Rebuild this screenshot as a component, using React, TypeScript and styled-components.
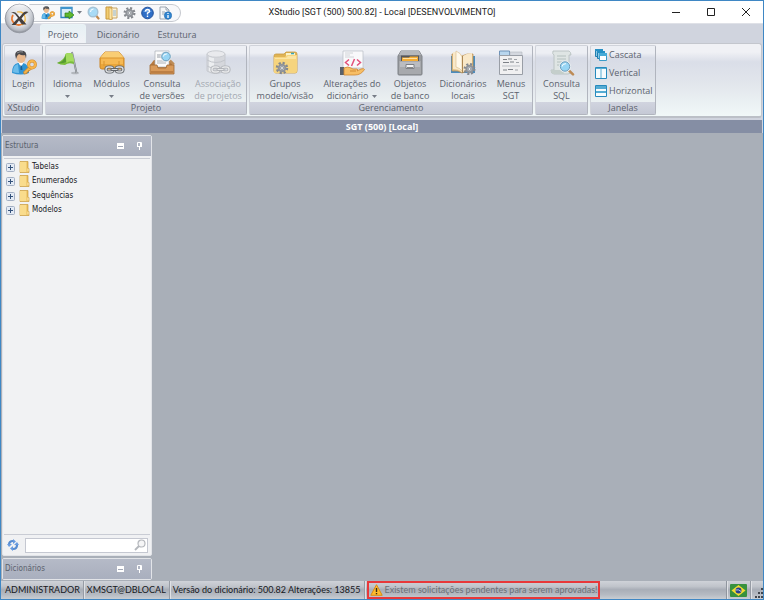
import React from "react";
import styled, { createGlobalStyle, css } from "styled-components";

const GlobalStyle = createGlobalStyle`
  * { box-sizing: border-box; }
  body { margin: 0; }
  button, input { font: inherit; color: inherit; }
  button { margin: 0; padding: 0; border: 0; background: none; cursor: pointer; }
  svg { display: block; flex: none; }
`;

const Window = styled.div`
  position: relative;
  display: flex;
  flex-direction: column;
  min-width: 660px;
  height: 100vh;
  border: 1px solid #3f87c4;
  background: #d0d4de;
  color: #5b626d;
  font: 9px/12px "Open Sans", "Noto Sans", sans-serif;
  overflow: hidden;
`;

const TitleBar = styled.header`
  display: grid;
  grid-template-columns: 1fr auto 1fr;
  align-items: center;
  height: 22px;
  flex: none;
  background: #fff;
`;

const Title = styled.h1`
  margin: 0;
  color: #1c1c1c;
  font: 9px/12px Roboto, sans-serif;
  white-space: nowrap;
`;

const QuickAccess = styled.div`
  display: flex;
  align-items: center;
  justify-self: start;
  gap: 5px;
  height: 18px;
  margin: 1px 0 0 28px;
  padding: 0 8px 0 11px;
  border: 1px solid #c6c9cf;
  border-left-color: transparent;
  border-radius: 0 9px 9px 0;
  background: #f7f8fa;
`;

const ToolButton = styled.button`
  display: flex;
  align-items: center;
  gap: 3px;
`;

const WindowControls = styled.div`
  display: flex;
  justify-self: end;
`;

const WindowButton = styled.button`
  display: flex;
  align-items: center;
  justify-content: center;
  width: 35px;
  height: 22px;
`;

const Orb = styled.button`
  position: absolute;
  z-index: 2;
  top: 1px;
  left: 2px;
`;

const Tabs = styled.nav`
  display: flex;
  align-items: flex-end;
  flex: none;
  height: 20px;
  padding-left: 39px;
  border-top: 1px solid #dfe1e7;
  background: #d0d4de;
`;

const Tab = styled.button<{ $active?: boolean; $width: number }>`
  width: ${(p) => p.$width}px;
  height: 19px;
  padding-top: 1px;
  border: 1px solid transparent;
  border-bottom: 0;
  border-radius: 3px 3px 0 0;
  ${(p) =>
    p.$active &&
    css`
      border-color: #e9f2f5;
      background: linear-gradient(#e6f0f4, #f1f2f6);
    `}
`;

const Ribbon = styled.div`
  display: flex;
  flex: none;
  gap: 2px;
  height: 75px;
  margin: 0 1px;
  padding: 1px;
  border: 1px solid #c3c6cd;
  border-bottom: 2px solid #bcc0c7;
  border-radius: 3px;
  background: linear-gradient(#f0f1f5 0 8px, #dadee8 18px, #e2e6ec 40px, #f1f8f8);
`;

const Group = styled.section`
  display: flex;
  flex-direction: column;
  border: 1px solid #b1b5be;
  border-top-color: #d0d3da;
  border-left-color: #d0d3da;
  border-radius: 2px;
  background: linear-gradient(#edeff4 0 7px, #d7dbe6 12px, #dde1e8 30px, #ebf1f2 56px);
`;

const GroupBody = styled.div`
  display: flex;
  flex: none;
  height: 56px;
`;

const GroupLabel = styled.h2`
  flex: 1;
  margin: 0;
  padding: 0 2px;
  background: linear-gradient(#d1d4df, #c5c9d5);
  font: 9px/12px "Open Sans", "Noto Sans", sans-serif;
  text-align: center;
`;

const LargeButton = styled.button<{ $width: number }>`
  display: flex;
  flex-direction: column;
  align-items: center;
  width: ${(p) => p.$width}px;
  padding-top: 4px;
  white-space: nowrap;
  &:disabled { color: #a3a8b1; cursor: default; }
`;

const Caption = styled.span`
  display: flex;
  align-items: center;
  justify-content: center;
  gap: 4px;
  height: 12px;
`;

const IconSlot = styled.span`
  display: block;
  height: 28px;
`;

const SmallColumn = styled.div`
  display: flex;
  flex-direction: column;
  width: 64px;
  padding-left: 4px;
`;

const SmallButton = styled.button`
  display: flex;
  align-items: center;
  gap: 2px;
  height: 18px;
`;

const DocumentBar = styled.div`
  flex: none;
  height: 13px;
  margin: 2px 1px 0;
  background: #858ea4;
  color: #fff;
  font: bold 9px/13px "Open Sans", sans-serif;
  text-align: center;
`;

const Workspace = styled.main`
  display: flex;
  flex: 1;
  min-height: 0;
  padding: 2px 1px 0;
  background: #a9afb8;
`;

const Sidebar = styled.aside`
  display: flex;
  flex-direction: column;
  gap: 2px;
  width: 150px;
  padding-bottom: 1px;
`;

const Panel = styled.section<{ $grow?: boolean }>`
  display: flex;
  flex-direction: column;
  flex: ${(p) => (p.$grow ? "1" : "none")};
  min-height: 0;
  border: 1px solid #e2e4e8;
  border-radius: 2px;
  background: #f0f1f3;
`;

const PanelHeader = styled.header`
  display: flex;
  align-items: center;
  flex: none;
  height: 20px;
  padding: 0 2px;
  background: linear-gradient(#b5bac7, #a9afbe);
  font: 8px/12px "DejaVu Sans Condensed", "DejaVu Sans", sans-serif;
`;

const PanelTitle = styled.h2`
  flex: 1;
  margin: 0;
  font: inherit;
`;

const PanelButton = styled.button`
  display: flex;
  justify-content: center;
  width: 19px;
`;

const Tree = styled.ul`
  flex: 1;
  margin: 2px 1px 0;
  padding: 1px 0 0 2px;
  border: 1px solid #c9ccd4;
  border-width: 1px 0;
  background: #f1f2f3;
  color: #15161b;
  font: 8px/12px "DejaVu Sans Condensed", "DejaVu Sans", sans-serif;
  list-style: none;
`;

const TreeRow = styled.li`
  display: flex;
  align-items: center;
  height: 14px;
  &:nth-child(even) { margin-bottom: 1px; }
`;

const Expander = styled.button`
  margin-right: 4px;
`;

const TreeLabel = styled.span`
  margin-left: 2px;
`;

const SearchRow = styled.div`
  display: flex;
  align-items: center;
  flex: none;
  gap: 6px;
  height: 20px;
  padding: 0 3px 0 4px;
`;

const SearchBox = styled.label`
  display: flex;
  align-items: center;
  flex: 1;
  min-width: 0;
  height: 15px;
  padding-right: 1px;
  border: 1px solid #c5c8d1;
  background: #fff;
`;

const SearchInput = styled.input`
  flex: 1;
  width: 0;
  min-width: 0;
  height: 13px;
  padding: 0 3px;
  border: 0;
  outline: 0;
  background: transparent;
`;

const StatusBar = styled.footer`
  display: flex;
  flex: none;
  height: 18px;
  padding-left: 1px;
  background: linear-gradient(#cfd2d8, #c0c4cb 30%, #a9aeb7 48%, #b5bac2 75%, #c9cdd2);
  color: #16181d;
  font: 9px/18px Lato, sans-serif;
  white-space: nowrap;
`;

const StatusItem = styled.span`
  display: flex;
  align-items: center;
  justify-content: center;
  padding: 0 3px;
  border-right: 1px solid #979ca5;
  box-shadow: 1px 0 #dfe1e5;
`;

const StatusFill = styled.span`
  flex: 1;
  border-right: 1px solid #8f959e;
  box-shadow: 1px 0 #dfe1e5;
`;

const Alert = styled.button`
  display: flex;
  align-items: center;
  gap: 2px;
  margin-left: 2px;
  padding: 0 1px;
  border: 2px solid #e8383a;
  color: #6d7178;
  line-height: 14px;
`;

const Grip = styled.span`
  display: flex;
  align-items: flex-end;
  padding-left: 3px;
`;

function Arrow() {
  return <svg width="5" height="3" viewBox="0 0 5 3"><path d="M0 0h5L2.5 3z" fill="#777d87" /></svg>;
}

function OrbIcon() {
  return (
    <svg width="33" height="33" viewBox="0 0 33 33">
      <defs>
        <radialGradient id="orb" cx=".5" cy=".45" r=".55">
          <stop offset="0" stopColor="#fff" /><stop offset=".55" stopColor="#e1e3e7" />
          <stop offset=".85" stopColor="#b5b9c1" /><stop offset="1" stopColor="#858992" />
        </radialGradient>
        <linearGradient id="gloss" x2="0" y2="1">
          <stop stopColor="#f8f9fb" /><stop offset="1" stopColor="#ccd0d6" stopOpacity=".2" />
        </linearGradient>
      </defs>
      <circle cx="16.5" cy="16.5" r="14.3" fill="url(#orb)" stroke="#969aa3" />
      <path d="M3 16a13.5 13.5 0 0127 0q-13-6-27 0z" fill="url(#gloss)" />
      <path d="M10 13q-3 5 2 9 4 2 7 0" fill="none" stroke="#e8782e" strokeWidth="1.8" />
      <path d="M14 10q7-1 8 5 1 5-3 8" fill="none" stroke="#f3b53c" strokeWidth="1.2" />
      <path d="M8 10.500q4-1.500 6 1.500l2.500 3 4-4.500q2-1.500 5-.5-4 2-7 6.500l5 6h-4.500l-3-4-3.500 4.500H8.500l6.500-7-3-4Q10 10.500 8 10.500z" fill="#46403d" />
    </svg>
  );
}

function UserKeyIcon({ size }: { size: number }) {
  return (
    <svg width={size} height={size} viewBox="0 0 26 26">
      <path d="M1 23q0-9 6-10h5q6 1 6 10-8 3-17 0z" fill="#2f94d4" />
      <path d="M2 22q0-7 5-8l1 9q-4 0-6-1z" fill="#6bbcea" />
      <path d="M7 12l3 5 3-5v-3H7z" fill="#fff" />
      <path d="M9.500 15l1.500 1 .5 4h-2z" fill="#1d5e93" />
      <ellipse cx="10" cy="7.500" rx="4.600" ry="5.500" fill="#eab98e" />
      <path d="M5 9Q2 1 9 .5q8-.5 6 8l-1-3.500q-3 1-6-1-2 1-3 5z" fill="#4a494c" />
      <path d="M6 3q3-2 6-1" fill="none" stroke="#8d9094" />
      <path d="M18.500 16l-6 6 .5 2 3-.5v-1.500h1.500V20.500h1.500l2-2" fill="#f2b34a" stroke="#c87d20" strokeWidth=".7" />
      <circle cx="21" cy="14.500" r="3.400" fill="none" stroke="#d18a2c" strokeWidth="3" />
      <circle cx="21" cy="14.500" r="3.400" fill="none" stroke="#f7b64d" strokeWidth="2" />
    </svg>
  );
}

function FlagIcon() {
  return (
    <svg width="26" height="26" viewBox="0 0 26 26">
      <ellipse cx="20" cy="23" rx="4" ry="1.300" fill="#b3b7bd" />
      <path d="M17 2l4.500 21" stroke="#70757b" strokeWidth="1.800" /><path d="M17 2l4.500 21" stroke="#d8dbde" strokeWidth=".6" />
      <path d="M17.500 4q-4-2-7 0-1 6-8.500 9 3 2 8 2 3-3 9-1z" fill="#79bd3a" />
      <path d="M17.500 4q-4-2-7 0l1 9q3-3 8-1z" fill="#a4dc60" />
      <path d="M10.500 5q-1 7-8.500 8 5 1 9-1z" fill="#579b32" />
    </svg>
  );
}

function ChainLinks({ muted }: { muted?: boolean }) {
  const dark = muted ? "#b2b5ba" : "#62666b";
  const light = muted ? "#e6e7e9" : "#d7d9dc";
  return (
    <g fill="none" strokeLinecap="round">
      <g stroke={dark} strokeWidth="3.200"><rect x="7" y="17" width="7" height="5" rx="2.500" /><rect x="17" y="17" width="7" height="5" rx="2.500" /></g>
      <g stroke={light} strokeWidth="1.400"><rect x="7" y="17" width="7" height="5" rx="2.500" /><rect x="17" y="17" width="7" height="5" rx="2.500" /></g>
      <path d="M13 19.500h5" stroke={dark} strokeWidth="3" /><path d="M13 19.500h5" stroke={light} />
    </g>
  );
}

function ModulesIcon() {
  return (
    <svg width="26" height="26" viewBox="0 0 26 26">
      <path d="M6 2h14l5 6v9q0 2-2 2H3q-2 0-2-2V8z" fill="#eaa63a" stroke="#cc8524" />
      <path d="M6 2h14l5 6H1z" fill="#f9cd74" />
      <path d="M2 8h22v6H2z" fill="#f6b953" /><path d="M1 8h24M5 16v-5M20 16v-5" stroke="#d9942f" />
      <ChainLinks />
    </svg>
  );
}

function MagnifierMark({ x, y, r }: { x: number; y: number; r: number }) {
  return (
    <g>
      <path d={`M${x + r * 0.7} ${y + r * 0.7}l${r} ${r}`} stroke="#bd8b55" strokeWidth="2.500" strokeLinecap="round" />
      <circle cx={x} cy={y} r={r} fill="#b9e5fa" stroke="#e8eef2" strokeWidth="2.500" />
      <circle cx={x} cy={y} r={r} fill="#97d5f4" stroke="#6d9dbb" strokeWidth="1" />
      <path d={`M${x - r * 0.6} ${y}q0-${r * 0.6} ${r * 0.8}-${r * 0.6}`} fill="none" stroke="#fff" />
    </g>
  );
}

function InboxIcon() {
  return (
    <svg width="26" height="26" viewBox="0 0 26 26">
      <path d="M1 15l4-5h16l4 5v8H1z" fill="#b87b40" />
      <path d="M6 1h14v16H6z" fill="#fbfbfb" stroke="#abb0b5" strokeWidth=".7" />
      <path d="M8 4h4v4H8z" fill="#c9ccd0" /><path d="M8 11h9M8 13h9M13 4.500h3" stroke="#aeb3b8" />
      <path d="M1 15h7l1 3h8l1-3h7v9H1z" fill="#d99a59" stroke="#9f6732" strokeWidth=".8" />
      <path d="M2 21h22v2H2z" fill="#bd7f43" />
      <MagnifierMark x={17} y={6.5} r={4.3} />
    </svg>
  );
}

function DatabaseIcon() {
  return (
    <svg width="26" height="26" viewBox="0 0 26 26">
      <path d="M2 4v17q8 5 18 0V4z" fill="#d5d7dc" stroke="#c6c9cf" />
      <path d="M4 7v14q3 2 5 2V8z" fill="#eceef0" />
      <path d="M2 10q9 5 18 0M2 16q9 5 18 0" fill="none" stroke="#c2c5cb" />
      <ellipse cx="11" cy="4" rx="9" ry="3.200" fill="#e9eaed" stroke="#c9ccd1" />
      <ChainLinks muted />
    </svg>
  );
}

function GearMark({ x, y, r = 5 }: { x: number; y: number; r?: number }) {
  return (
    <g fill="none">
      <circle cx={x} cy={y} r={r} stroke="#84888e" strokeWidth={r * 0.5} strokeDasharray={`${r * 0.42} ${r * 0.365}`} />
      <circle cx={x} cy={y} r={r * 0.67} fill="#cbced3" stroke="#8f9399" strokeWidth={r * 0.4} />
      <circle cx={x} cy={y} r={r * 0.3} fill="#eef0f2" stroke="#777c83" strokeWidth=".7" />
    </g>
  );
}

function FolderGearIcon() {
  return (
    <svg width="26" height="26" viewBox="0 0 26 26">
      <path d="M2 6q0-2 2-2h8l2-2h9q2 0 2 2v17q0 2-2 2H4q-2 0-2-2z" fill="#e0b455" stroke="#c99b40" strokeWidth=".8" />
      <path d="M14 3h9v4h-9z" fill="#f9f3c9" /><path d="M19 3.500h3" stroke="#36a4bd" strokeWidth="1.500" />
      <path d="M2 7h11l2-2h10v16q0 2-2 2H2z" fill="#f6d47e" /><path d="M3 8h11l2-2h8v3H3z" fill="#fbe4a2" />
      <GearMark x={10} y={18} r={5} />
    </svg>
  );
}

function CodeHandIcon() {
  return (
    <svg width="26" height="26" viewBox="0 0 26 26">
      <path d="M4 1h20v17H4z" fill="#f9f9fb" stroke="#b8bdc4" strokeWidth=".7" />
      <path d="M6 3h8M6 5h5M6 7h9" stroke="#d1d4d8" />
      <path d="M10 9.500l-3.500 3 3.500 3M18 9.500l3.500 3-3.500 3M15.500 9l-3 7" fill="none" stroke="#e2507a" strokeWidth="1.500" />
      <path d="M1 17h4v8H1z" fill="#59616b" />
      <path d="M5 18q4-2 7 0l2 1h4q2 1 0 2l4-2q3-1 3.500.5-3.500 5.500-9.500 5.500H5z" fill="#f7be66" stroke="#cf8833" strokeWidth=".8" />
      <path d="M11 21h6" stroke="#cf8833" />
    </svg>
  );
}

function CabinetIcon() {
  return (
    <svg width="26" height="26" viewBox="0 0 26 26">
      <path d="M4 1h18l3 5v18q0 1-1 1H2q-1 0-1-1V6z" fill="#97999d" stroke="#7f8287" />
      <path d="M4 1h18l2 4H2z" fill="#b5b8bc" /><path d="M4 5.500h18v6H4z" fill="#54565a" />
      <path d="M5 7.500h7l1-1h8v5H5z" fill="#f5ad35" /><path d="M6 8.500h14" stroke="#ffe0a0" />
      <path d="M2 11h22v13H2z" fill="#a7a9ad" /><path d="M3 12h20v5H3z" fill="#babcc0" />
      <path d="M9 14.500h8v4H9z" fill="#f2f3f4" stroke="#7d8085" /><path d="M10 17.500h6" stroke="#888" />
    </svg>
  );
}

function BookGearIcon() {
  return (
    <svg width="26" height="26" viewBox="0 0 26 26">
      <path d="M1 6h24v17H1z" fill="#4b8cbd" />
      <path d="M2 4q6-1 10 2 5-3 11-2v17q-7-1-11 2-4-3-10-2z" fill="#e8c68c" stroke="#b4894d" strokeWidth=".7" />
      <path d="M3 2q6 0 9 4v16q-3-3-9-3z" fill="#f9e9c9" /><path d="M13 6q4-3 9-3v16q-6 0-9 3z" fill="#f9e8c8" />
      <path d="M6 1q5 2 6 6v14q-2-3-6-4z" fill="#fff9eb" stroke="#d9bb86" strokeWidth=".6" />
      <path d="M12.500 6v17" stroke="#ad8752" />
      <GearMark x={19.5} y={19} r={4.8} />
    </svg>
  );
}

function MenuIcon() {
  return (
    <svg width="26" height="26" viewBox="0 0 26 26">
      <path d="M1.500 1h10v5h-10z" fill="#b8d6ee" stroke="#6f93b8" /><path d="M12 2h12v4H12z" fill="#d4d8df" stroke="#b4b8c0" strokeWidth=".6" />
      <path d="M1.500 5.500h23v19h-23z" fill="#f0f0f1" stroke="#999ea6" />
      <path d="M5 9.500h4M10 9h4M5 12.500h6M12 12h4M5 20h4M10 19.500h5" stroke="#7d8187" strokeWidth="1.200" />
      <path d="M4 16h18" stroke="#bbbfc4" /><path d="M16 9.500h3M18 12.500h3M17 20h3" stroke="#a0a4a9" />
    </svg>
  );
}

function SqlIcon() {
  return (
    <svg width="26" height="26" viewBox="0 0 26 26">
      <path d="M4 1h16q2 1 2 4h-2v15l2 1q0 3-3 3H5q-3 0-3-4h3V5Q3 4 4 1z" fill="#dfe5e4" stroke="#b3bcbb" strokeWidth=".8" />
      <path d="M8 6h9M8 9h9M8 12h8M8 15h5" stroke="#b4c0be" />
      <path d="M2 20h12l1 4H5q-3 0-3-4z" fill="#c4cecb" />
      <MagnifierMark x={16} y={16.5} r={4.7} />
    </svg>
  );
}

function LayoutIcon({ kind }: { kind: "cascade" | "vertical" | "horizontal" }) {
  return (
    <svg width="12" height="12" viewBox="0 0 12 12">
      {kind === "cascade" && (
        <>
          <path d="M.5.500h7v7h-7z" fill="#8cc8e4" stroke="#217eaf" /><path d="M0 0h8v2H0z" fill="#2790c4" />
          <path d="M2.500 2.500h7v7h-7z" fill="#8cc8e4" stroke="#217eaf" /><path d="M2 2h8v2H2z" fill="#2790c4" />
          <path d="M4.500 4.500h7v7h-7z" fill="#fff" stroke="#3a9ac8" /><path d="M4 4h8v3H4z" fill="#48abd7" />
        </>
      )}
      {kind === "vertical" && (
        <><path d="M.5.500h11v11H.5z" fill="#f5fbfd" stroke="#268abd" /><path d="M1 1h10v1H1z" fill="#54acd3" /><path d="M6 1v10" stroke="#5aaed4" /></>
      )}
      {kind === "horizontal" && (
        <><path d="M.5.500h11v11H.5z" fill="#f5fbfd" stroke="#268abd" /><path d="M1 1h10v3H1zM1 6h10v2H1z" fill="#54acd3" /></>
      )}
    </svg>
  );
}

function MinimizePanelIcon() {
  return <svg width="7" height="6" viewBox="0 0 7 6"><path d="M0 0h7v6H0z" fill="#fff" /><path d="M1 3.500h5" stroke="#a2a8b6" /></svg>;
}

function PinIcon() {
  return <svg width="7" height="8" viewBox="0 0 7 8"><path d="M1.500 4.500V.5h4v4M1 4.500h5M3.500 5v3M4.500 1v3" fill="none" stroke="#fff" /></svg>;
}

const treeItems = ["Tabelas", "Enumerados", "Sequências", "Modelos"];

interface Command {
  lines: string[];
  icon: React.ReactNode;
  width: number;
  arrow?: boolean;
  disabled?: boolean;
}

const groups: { label: string; commands: Command[] }[] = [
  { label: "XStudio", commands: [{ lines: ["Login"], icon: <UserKeyIcon size={26} />, width: 37 }] },
  {
    label: "Projeto",
    commands: [
      { lines: ["Idioma"], icon: <FlagIcon />, width: 43, arrow: true },
      { lines: ["Módulos"], icon: <ModulesIcon />, width: 45, arrow: true },
      { lines: ["Consulta", "de versões"], icon: <InboxIcon />, width: 56 },
      { lines: ["Associação", "de projetos"], icon: <DatabaseIcon />, width: 56, disabled: true },
    ],
  },
  {
    label: "Gerenciamento",
    commands: [
      { lines: ["Grupos", "modelo/visão"], icon: <FolderGearIcon />, width: 70 },
      { lines: ["Alterações do", "dicionário"], icon: <CodeHandIcon />, width: 64, arrow: true },
      { lines: ["Objetos", "de banco"], icon: <CabinetIcon />, width: 52 },
      { lines: ["Dicionários", "locais"], icon: <BookGearIcon />, width: 54 },
      { lines: ["Menus", "SGT"], icon: <MenuIcon />, width: 42 },
    ],
  },
  { label: "\u00a0", commands: [{ lines: ["Consulta", "SQL"], icon: <SqlIcon />, width: 51 }] },
];

function RibbonCommand({ lines, icon, width, arrow, disabled }: Command) {
  return (
    <LargeButton type="button" $width={width} disabled={disabled}>
      <IconSlot>{icon}</IconSlot>
      <Caption>{lines[0]}</Caption>
      <Caption>{lines[1]}{arrow && <Arrow />}</Caption>
    </LargeButton>
  );
}

function PanelHead({ title }: { title: string }) {
  return (
    <PanelHeader>
      <PanelTitle>{title}</PanelTitle>
      <PanelButton type="button" aria-label={`Minimizar ${title}`}><MinimizePanelIcon /></PanelButton>
      <PanelButton type="button" aria-label={`Fixar ${title}`}><PinIcon /></PanelButton>
    </PanelHeader>
  );
}

export default function App() {
  return (
    <>
      <GlobalStyle />
      <Window>
        <Orb type="button" aria-label="Menu XStudio"><OrbIcon /></Orb>
        <TitleBar>
          <QuickAccess>
            <ToolButton type="button" aria-label="Login"><UserKeyIcon size={14} /></ToolButton>
            <ToolButton type="button" aria-label="Abrir">
              <svg width="14" height="14" viewBox="0 0 14 14">
                <path d="M1 1.500h11v10H1z" fill="#d9ecf8" stroke="#2f82bd" strokeWidth="1.300" /><path d="M1 1h11v2H1z" fill="#3f95cd" />
                <path d="M5 7h4V5l5 4-5 4v-2H5z" fill="#60b92e" stroke="#31801b" strokeWidth=".7" />
              </svg>
              <Arrow />
            </ToolButton>
            <ToolButton type="button" aria-label="Consultar">
              <svg width="13" height="14" viewBox="0 0 13 14">
                <path d="M9 9.500l2.500 3" stroke="#c18a50" strokeWidth="2.200" strokeLinecap="round" />
                <circle cx="6" cy="6" r="4.800" fill="#a9dbf6" stroke="#a5c3d6" strokeWidth="1.400" /><path d="M3.500 6q0-3 3-3" fill="none" stroke="#fff" />
              </svg>
            </ToolButton>
            <ToolButton type="button" aria-label="Dicionário">
              <svg width="13" height="14" viewBox="0 0 13 14">
                <path d="M1 1h6v12H1z" fill="#f2cd72" stroke="#c8973b" /><path d="M6 2h6v10H6z" fill="#fff4d6" stroke="#c5a467" /><path d="M8 5h3M8 7h3M8 9h3" stroke="#8fb0c8" /><path d="M4 1l3 2v11l-3-1z" fill="#fae4a5" stroke="#c8973b" strokeWidth=".7" />
              </svg>
            </ToolButton>
            <ToolButton type="button" aria-label="Configurações">
              <svg width="13" height="14" viewBox="0 0 13 14"><GearMark x={6.5} y={7} r={4.8} /></svg>
            </ToolButton>
            <ToolButton type="button" aria-label="Ajuda">
              <svg width="13" height="14" viewBox="0 0 13 14">
                <circle cx="6.500" cy="7" r="5.800" fill="#2f6fc7" stroke="#21509a" /><path d="M2 6q4-5 9 0" fill="#6ba0e2" />
                <path d="M4.500 5.500q0-2 2-2t2 1.700Q8.500 6.500 6.500 7v1.500M6.500 9.500V11" fill="none" stroke="#fff" strokeWidth="1.400" />
              </svg>
            </ToolButton>
            <ToolButton type="button" aria-label="Informações">
              <svg width="13" height="14" viewBox="0 0 13 14">
                <path d="M1 1h6l3 3v9H1z" fill="#f5f7f9" stroke="#9ca6b1" /><path d="M7 1v3h3M3 6h3M3 8h2" fill="none" stroke="#9ca6b1" />
                <circle cx="9" cy="9.500" r="3.700" fill="#3186d1" stroke="#2267a9" strokeWidth=".6" /><path d="M9 9v3M9 7v1" stroke="#fff" strokeWidth="1.300" />
              </svg>
            </ToolButton>
          </QuickAccess>
          <Title>XStudio [SGT (500) 500.82] - Local [DESENVOLVIMENTO]</Title>
          <WindowControls>
            <WindowButton type="button" aria-label="Minimizar"><svg width="8" height="8" viewBox="0 0 8 8"><path d="M0 4.500h8" stroke="#222" /></svg></WindowButton>
            <WindowButton type="button" aria-label="Maximizar"><svg width="8" height="8" viewBox="0 0 8 8"><path d="M.5.500h7v7h-7z" fill="none" stroke="#222" /></svg></WindowButton>
            <WindowButton type="button" aria-label="Fechar"><svg width="8" height="8" viewBox="0 0 8 8"><path d="M0 0l8 8M8 0L0 8" stroke="#222" /></svg></WindowButton>
          </WindowControls>
        </TitleBar>
        <Tabs>
          <Tab type="button" $active $width={46}>Projeto</Tab>
          <Tab type="button" $width={64}>Dicionário</Tab>
          <Tab type="button" $width={54}>Estrutura</Tab>
        </Tabs>
        <Ribbon>
          {groups.map((group) => (
            <Group key={group.label}>
              <GroupBody>
                {group.commands.map((command) => <RibbonCommand key={command.lines.join(" ")} {...command} />)}
              </GroupBody>
              <GroupLabel>{group.label}</GroupLabel>
            </Group>
          ))}
          <Group>
            <GroupBody>
              <SmallColumn>
                <SmallButton type="button"><LayoutIcon kind="cascade" />Cascata</SmallButton>
                <SmallButton type="button"><LayoutIcon kind="vertical" />Vertical</SmallButton>
                <SmallButton type="button"><LayoutIcon kind="horizontal" />Horizontal</SmallButton>
              </SmallColumn>
            </GroupBody>
            <GroupLabel>Janelas</GroupLabel>
          </Group>
        </Ribbon>
        <DocumentBar>SGT (500) [Local]</DocumentBar>
        <Workspace>
          <Sidebar>
            <Panel $grow>
              <PanelHead title="Estrutura" />
              <Tree>
                {treeItems.map((item) => (
                  <TreeRow key={item}>
                    <Expander type="button" aria-label={`Expandir ${item}`}>
                      <svg width="9" height="9" viewBox="0 0 9 9"><rect x=".5" y=".5" width="8" height="8" rx="1" fill="#e4ebf5" stroke="#a3afc3" /><path d="M2 4.500h5M4.500 2v5" stroke="#34527b" /></svg>
                    </Expander>
                    <svg width="11" height="12" viewBox="0 0 11 12"><path d="M1 .5h8v7h1v4H1z" fill="#eabc58" stroke="#c89d43" strokeWidth=".7" /><path d="M1 1h6.500v10H1z" fill="#f9dc8c" /><path d="M8.500 7.500h1v3h-1z" fill="#fff0bd" /></svg>
                    <TreeLabel>{item}</TreeLabel>
                  </TreeRow>
                ))}
              </Tree>
              <SearchRow>
                <ToolButton type="button" aria-label="Atualizar">
                  <svg width="12" height="12" viewBox="0 0 12 12"><path d="M2 6q0-4 4-4M10 6q0 4-4 4" fill="none" stroke="#568bd0" strokeWidth="2.200" /><path d="M6 0l3 2.500L6 5zM6 7v5L3 9.500zM0 5h5L2 8zM7 6l3-3 2 3z" fill="#679be0" /></svg>
                </ToolButton>
                <SearchBox>
                  <SearchInput type="text" aria-label="Pesquisar" />
                  <svg width="12" height="12" viewBox="0 0 12 12"><circle cx="7.500" cy="4.500" r="3.500" fill="#f5f5f6" stroke="#b4b7bc" strokeWidth="1.200" /><path d="M5 7l-4 4" stroke="#b4b7bc" strokeWidth="1.800" /></svg>
                </SearchBox>
              </SearchRow>
            </Panel>
            <Panel><PanelHead title="Dicionários" /></Panel>
          </Sidebar>
        </Workspace>
        <StatusBar>
          <StatusItem>ADMINISTRADOR</StatusItem>
          <StatusItem>XMSGT@DBLOCAL</StatusItem>
          <StatusItem>Versão do dicionário: 500.82 Alterações: 13855</StatusItem>
          <Alert type="button">
            <svg width="13" height="12" viewBox="0 0 13 12"><path d="M6.500.7l5.700 10.600H.8z" fill="#fdbb2d" stroke="#dc8b13" strokeLinejoin="round" /><path d="M6.500 4v4M6.500 9v1.300" stroke="#3b2c14" strokeWidth="1.400" /></svg>
            Existem solicitações pendentes para serem aprovadas!
          </Alert>
          <StatusFill />
          <StatusItem>
            <svg width="17" height="13" viewBox="0 0 17 13"><rect width="17" height="13" rx="1" fill="#38913e" /><path d="M8.500 1l7 5.500-7 5.500-7-5.500z" fill="#f4dc31" /><circle cx="8.500" cy="6.500" r="3" fill="#28418e" /><path d="M5.600 6q3-1 5.600 1.500" fill="none" stroke="#dce6ef" strokeWidth=".8" /></svg>
          </StatusItem>
          <Grip><svg width="9" height="14" viewBox="0 0 9 14"><path d="M7 3h2v2H7zM4 7h2v2H4zM7 7h2v2H7zM1 11h2v2H1zM4 11h2v2H4zM7 11h2v2H7z" fill="#42464d" /></svg></Grip>
        </StatusBar>
      </Window>
    </>
  );
}
